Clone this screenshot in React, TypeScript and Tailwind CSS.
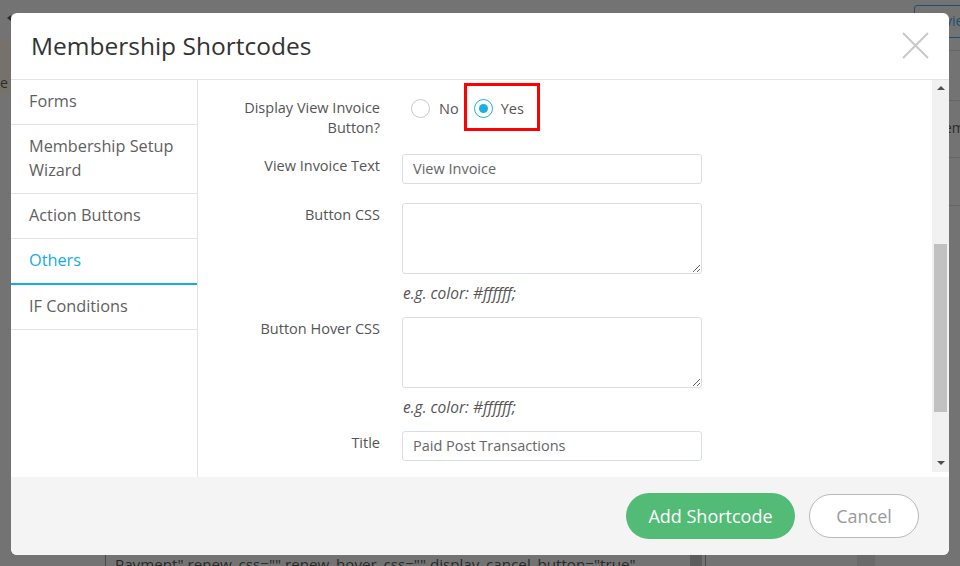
import React from "react";

function Radio({ checked }: { checked?: boolean }) {
  return (
    <span
      className={
        "flex h-[19px] w-[19px] items-center justify-center rounded-full border bg-white " +
        (checked ? "border-[#1cb0e0]" : "border-[#c9c9c9]")
      }
    >
      {checked && <span className="h-[9px] w-[9px] rounded-full bg-[#1cb0e0]" />}
    </span>
  );
}

function Field({ label, children }: { label: React.ReactNode; children: React.ReactNode }) {
  return (
    <div className="flex gap-[22px]">
      <div className="w-[140px] shrink-0 pt-[2px] text-right text-[14.5px] leading-5 text-[#555]">{label}</div>
      <div className="w-[300px]">{children}</div>
    </div>
  );
}

function TextInput({ value }: { value: string }) {
  return (
    <div className="flex h-[30px] items-center rounded-[3px] border border-[#d9dde4] bg-white px-[10px] text-[14.5px] text-[#666]">
      {value}
    </div>
  );
}

function Area() {
  return (
    <textarea
      readOnly
      className="block h-[71px] w-full rounded-[3px] border border-[#d9dde4] bg-white outline-none"
    />
  );
}

function Hint() {
  return <div className="mt-[9px] pl-px text-[15.5px] italic leading-5 text-[#555]">e.g. color: #ffffff;</div>;
}

const tabs = ["Forms", "Membership Setup Wizard", "Action Buttons", "Others", "IF Conditions"];

export default function App() {
  return (
    <div className="relative h-[566px] w-[960px] overflow-hidden bg-[#737373] font-['Open_Sans',sans-serif]">
      {/* page behind the overlay */}
      <div className="absolute left-[7px] top-[15px] h-0 w-0 border-y-[3px] border-r-[4px] border-y-transparent border-r-[#2a2a2a]" />
      <div className="absolute left-0 top-[40px] h-[54px] w-[12px] bg-[#76716b]" />
      <div className="absolute left-0 top-[72px] text-[14px] text-[#2c2c2c]">e is</div>
      <div className="absolute left-[914px] top-[5px] h-[33px] w-[60px] rounded-[3px] border border-[#1f4f6e] pl-[30px] pt-[4px] text-[14px] text-[#1f4f6e]">vie</div>
      <div className="absolute left-[949px] top-[50px] h-px w-[11px] bg-[#666]" />
      <div className="absolute left-[949px] top-[100px] h-px w-[11px] bg-[#666]" />
      <div className="absolute left-[944px] top-[117px] text-[14px] text-[#2c2c2c]">em</div>
      <div className="absolute left-[949px] top-[157px] h-px w-[11px] bg-[#666]" />
      <div className="absolute left-[949px] top-[205px] h-px w-[11px] bg-[#666]" />
      <div className="absolute left-[105px] top-[555px] h-[11px] w-px bg-[#4a4a4a]" />
      <div className="absolute left-[115px] top-[553px] whitespace-nowrap text-[15.2px] text-[#2a2a2a]">
        Payment" renew_css="" renew_hover_css="" display_cancel_button="true"
      </div>
      <div className="absolute left-[690px] top-[555px] h-[11px] w-[12px] bg-[#5c5c5c]" />
      <div className="absolute left-[705px] top-[555px] h-[11px] w-px bg-[#4a4a4a]" />
      <div className="absolute left-[857px] top-[555px] h-[11px] w-[18px] bg-[#6a6a6a]" />

      {/* modal */}
      <div className="absolute left-[11px] top-[13px] flex h-[542px] w-[938px] flex-col overflow-hidden rounded-[6px] bg-white">
        <div className="flex h-[67px] shrink-0 items-center justify-between border-b border-[#e5e5e5] pl-[20px] pr-[20px]">
          <h1 className="text-[24.5px] font-normal text-[#333]">Membership Shortcodes</h1>
          <svg width="27" height="27" viewBox="0 0 27 27" className="mb-[2px]">
            <path d="M1 1L26 26M26 1L1 26" stroke="#c9c9c9" strokeWidth="2" />
          </svg>
        </div>

        <div className="flex h-[397px] shrink-0">
          <div className="w-[187px] shrink-0 border-r border-[#e2e4ea]">
            {tabs.map((t) => (
              <div
                key={t}
                className={
                  "pb-[11px] pl-[18px] pr-[10px] pt-[9px] text-[16.3px] leading-6 " +
                  (t === "Others"
                    ? "border-b-2 border-[#13abe3] text-[#13abe3]"
                    : "border-b border-[#e2e4ea] text-[#5f5f5f]")
                }
              >
                {t}
              </div>
            ))}
          </div>

          <div className="flex-1 pl-[42px] pt-[16px]">
            <div className="mb-[16px]">
              <Field
                label={
                  <>
                    Display View Invoice
                    <br />
                    Button?
                  </>
                }
              >
                <div className="flex items-center pl-[9px] pt-[2px] text-[14.5px] text-[#555]">
                  <Radio />
                  <span className="ml-[9px]">No</span>
                  <div className="relative ml-[15px] flex items-center">
                    <Radio checked />
                    <span className="ml-[8px]">Yes</span>
                    <div className="absolute -bottom-[11px] -left-[10px] -right-[16px] -top-[15px] border-[3px] border-[#ff0000]" />
                  </div>
                </div>
              </Field>
            </div>
            <div className="mb-[19px]">
              <Field label="View Invoice Text">
                <TextInput value="View Invoice" />
              </Field>
            </div>
            <div className="mb-[14px]">
              <Field label="Button CSS">
                <Area />
                <Hint />
              </Field>
            </div>
            <div className="mb-[14px]">
              <Field label="Button Hover CSS">
                <Area />
                <Hint />
              </Field>
            </div>
            <Field label="Title">
              <TextInput value="Paid Post Transactions" />
            </Field>
          </div>

          {/* scrollbar */}
          <div className="flex h-[392px] w-[17px] shrink-0 flex-col items-center bg-[#f1f1f1]">
            <div className="mt-[6px] h-0 w-0 border-x-[4px] border-b-[4px] border-x-transparent border-b-[#505050]" />
            <div className="mt-[154px] h-[168px] w-[13px] bg-[#c1c1c1]" />
            <div className="mt-auto mb-[7px] h-0 w-0 border-x-[4px] border-t-[4px] border-x-transparent border-t-[#505050]" />
          </div>
        </div>

        <div className="flex flex-1 items-center justify-end gap-[14px] bg-[#f4f4f4] pr-[30px]">
          <button className="h-[46px] w-[169px] rounded-full bg-[#52bb76] text-[18px] text-white">Add Shortcode</button>
          <button className="h-[44px] w-[110px] rounded-full border border-[#b8b8b8] bg-white text-[18px] text-[#9a9a9a]">
            Cancel
          </button>
        </div>
      </div>
    </div>
  );
}
